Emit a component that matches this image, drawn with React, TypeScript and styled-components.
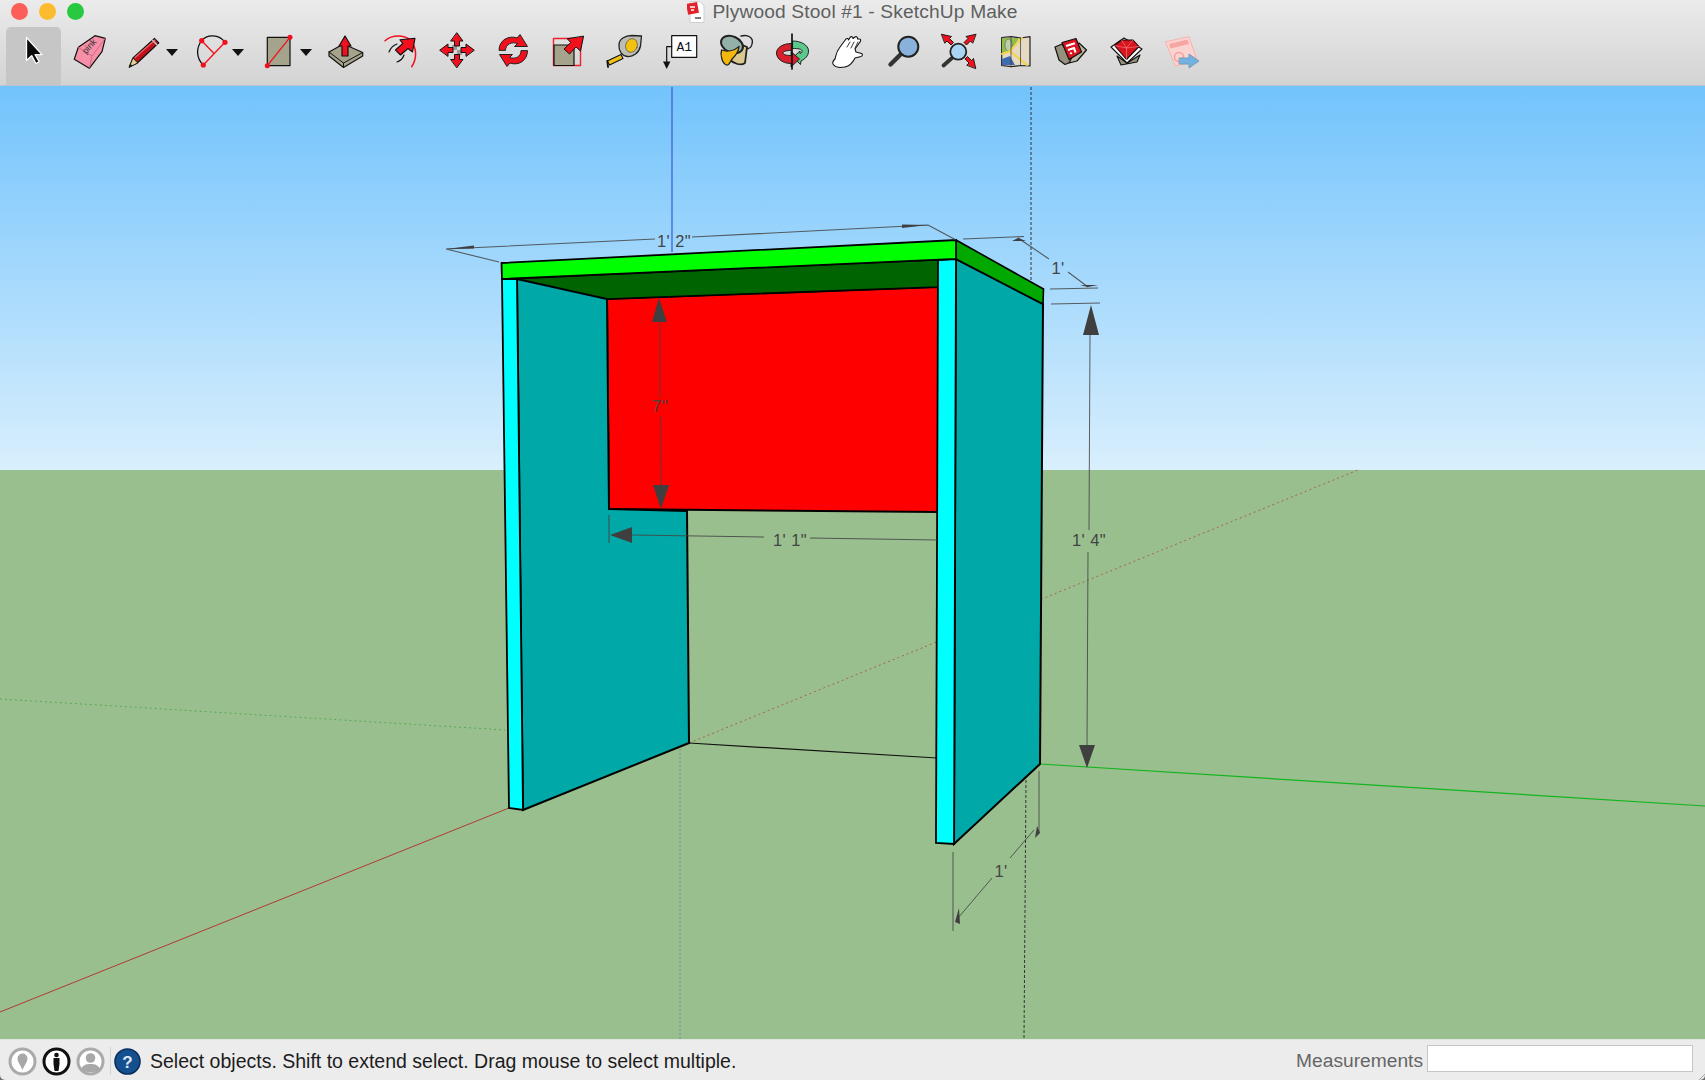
import React from "react";
import styled, { createGlobalStyle } from "styled-components";

const Global = createGlobalStyle`
  html, body { margin: 0; padding: 0; background: #6d6d6d; }
  body { font-family: "Liberation Sans", Arial, sans-serif; overflow: hidden; }
`;

const Window = styled.div`
  width: 1705px;
  height: 1080px;
  display: flex;
  flex-direction: column;
  overflow: hidden;
  border-radius: 0 0 5px 5px;
`;

const Chrome = styled.header`
  height: 86px;
  flex: none;
  display: flex;
  flex-direction: column;
  background: linear-gradient(#ebebeb, #d3d3d3);
  border-bottom: 1px solid #b9c6cf;
  box-sizing: border-box;
`;

const TitleBar = styled.div`
  height: 27px;
  flex: none;
  display: grid;
  grid-template-columns: 1fr auto 1fr;
  align-items: center;
  padding: 0 11px;
`;

const Lights = styled.div`
  display: flex;
  gap: 11px;
  margin-top: -5px;
  align-self: center;
`;

const Light = styled.span<{ $c: string }>`
  width: 17px;
  height: 17px;
  border-radius: 50%;
  background: ${(p) => p.$c};
`;

const Title = styled.div`
  display: flex;
  align-items: center;
  gap: 7px;
  font-size: 19.2px;
  color: #5f5f5f;
  margin-top: -4px;
  letter-spacing: 0.14px;
`;

const ToolBar = styled.div`
  display: flex;
  padding-left: 6px;
  height: 58px;
`;

const Tool = styled.div<{ $w: number; $active?: boolean; $caret?: boolean }>`
  width: ${(p) => p.$w}px;
  flex: none;
  height: 58px;
  display: flex;
  box-sizing: border-box;
  padding-top: 1px;
  align-items: flex-start;
  justify-content: ${(p) => (p.$caret ? "flex-start" : "center")};
  padding-left: ${(p) => (p.$caret ? "6px" : "0")};
  border-radius: 5px 5px 0 0;
  background: ${(p) => (p.$active ? "#c6c6c6" : "transparent")};
`;

const IconSvg = styled.svg`
  width: 44px;
  height: 44px;
  flex: none;
`;

const Caret = styled.span`
  width: 0;
  height: 0;
  margin-top: 21px;
  border-left: 6.5px solid transparent;
  border-right: 6.5px solid transparent;
  border-top: 7px solid #111;
`;

const Viewport = styled.main`
  flex: 1;
  position: relative;
  display: flex;
  flex-direction: column;
  min-height: 0;
`;

const Sky = styled.div`
  height: 384px;
  flex: none;
  background: linear-gradient(#72c3fc, #d9effd);
`;

const Ground = styled.div`
  flex: 1;
  background: #9abf8e;
`;

const ModelSvg = styled.svg`
  position: absolute;
  left: 0;
  top: 0;
  width: 1705px;
  height: 953px;
`;

const DimText = styled.text`
  font-family: "Liberation Sans", Arial, sans-serif;
  font-size: 16.5px;
  fill: #444;
  text-anchor: middle;
  letter-spacing: 0.4px;
`;

const StatusBar = styled.footer`
  height: 41px;
  flex: none;
  display: flex;
  align-items: center;
  position: relative;
  background: #ececec;
  border-top: 1px solid #dfe5dc;
  box-sizing: border-box;
  padding: 2px 12px 0 8px;
`;

const StatusIcons = styled.div`
  display: flex;
  gap: 5px;
  align-items: center;
`;

const StatusDivider = styled.span`
  width: 1px;
  height: 28px;
  background: #d4d4d4;
  margin: 0 2px 0 5px;
`;

const StatusText = styled.span`
  font-size: 19.5px;
  color: #1c1c1c;
  margin-left: 8px;
  flex: 1;
  white-space: nowrap;
`;

const MeasureLabel = styled.span`
  font-size: 19.2px;
  color: #666;
  margin-right: 4px;
`;

const MeasureBox = styled.div`
  width: 266px;
  height: 27px;
  box-sizing: border-box;
  background: #fff;
  border: 1px solid #c6c6c6;
  margin-top: -6px;
`;

const Grip = styled.svg`
  position: absolute;
  right: 0;
  bottom: 0;
  width: 8px;
  height: 8px;
`;

/* ---------- toolbar icons ---------- */
const Ic: React.FC<{ children: React.ReactNode }> = ({ children }) => (
  <IconSvg viewBox="0 0 44 44" fill="none" strokeLinejoin="round" strokeLinecap="round">
    {children}
  </IconSvg>
);

const Select = () => (
  <Ic>
    <path d="M14.5 9.5V32.5L19.7 27.6 23.9 35.5 27.1 33.8 23.1 26.6H30Z" fill="#0a0a0a" stroke="#fff" strokeWidth="1.3" />
  </Ic>
);

const Eraser = () => (
  <Ic>
    <path d="M7.3 31.3 11.3 19.3 28 7.7 38.3 10.3 35 23.7 22.3 40.3Z" fill="#f78fa8" stroke="#111" strokeWidth="1.2" />
    <path d="M11.3 19.3 25 28 38.3 10.3M25 28 22.3 40.3" stroke="#c9607c" strokeWidth="0.8" />
    <text x="23" y="21" fontSize="9" fontFamily="Liberation Sans, sans-serif" fill="#333" textAnchor="middle" transform="rotate(-48 23 19)">pink</text>
  </Ic>
);

const Pencil = () => (
  <Ic>
    <path d="M7.3 39 11 30 32.5 10.5 36.8 14.8 15.5 34.8Z" fill="#c1111b" stroke="#111" strokeWidth="1.2" />
    <path d="M7.3 39 11 30 15.5 34.8Z" fill="#e6cf92" stroke="#111" strokeWidth="0.8" />
    <path d="M7.3 39 8.6 36 10.4 37.6Z" fill="#111" />
    <path d="M13 29.5 33 12" stroke="#f4616a" strokeWidth="1.2" />
    <path d="M30.5 12.2 34.8 16.6" stroke="#bbb" strokeWidth="1.6" />
  </Ic>
);

const Arc = () => (
  <Ic>
    <path d="M13.7 12.7C19 6 31 6 37 14.3" stroke="#111" strokeWidth="1.3" />
    <path d="M13.7 12.7C8 20 8 30 15.3 37" stroke="#111" strokeWidth="1.3" />
    <path d="M13.7 12.7 25.3 24.7M37 14.3 15.3 37" stroke="#f1101c" strokeWidth="1.3" />
    <circle cx="13.7" cy="12.7" r="2.6" fill="#f1101c" />
    <circle cx="37" cy="14.3" r="2.6" fill="#f1101c" />
    <circle cx="15.3" cy="37" r="2.6" fill="#f1101c" />
  </Ic>
);

const RectIcon = () => (
  <Ic>
    <rect x="11.3" y="9.3" width="22.7" height="28.4" fill="#a6a38d" stroke="#111" strokeWidth="1.2" />
    <path d="M11.3 37.7 34 9.3" stroke="#f1101c" strokeWidth="1.3" />
    <circle cx="11.3" cy="37.7" r="2.5" fill="#f1101c" />
    <circle cx="34" cy="9.3" r="2.5" fill="#f1101c" />
  </Ic>
);

const PushPull = () => (
  <Ic>
    <path d="M6 24 20.5 16 39.7 24.5V28L20.5 39.5 6 28Z" fill="#a6a38d" stroke="#111" strokeWidth="1.2" />
    <path d="M6 24 20.5 35 39.7 24.5M20.5 35V39.5" stroke="#111" strokeWidth="1" />
    <path d="M22 8 28 18H25V28H19V18H16Z" fill="#f1101c" stroke="#111" strokeWidth="1.2" />
  </Ic>
);

const Offset = () => (
  <Ic>
    <path d="M6 12.7C14 6 27 7 32 13 38 20 38 31 32.7 38.7" stroke="#f1101c" strokeWidth="1.5" />
    <path d="M10 24C12 19 15 17 18 16M18 34C21 33 24 30 25 27" stroke="#111" strokeWidth="1.2" />
    <path d="M36 10.3 33.5 24 29 20.5 21.5 27 16.5 22 23.8 15.5 21 11.8Z" fill="#f1101c" stroke="#111" strokeWidth="1.1" />
  </Ic>
);

const Move = () => (
  <Ic>
    <rect x="17" y="17" width="10" height="10" fill="#d9d9d9" />
    <path d="M17 17h5v5h-5zM22 22h5v5h-5z" fill="#999" />
    <path d="M22 5 28 13H24.5V18H19.5V13H16Z" fill="#f1101c" stroke="#111" strokeWidth="1" />
    <path d="M22 39.5 28 31.5H24.5V26.5H19.5V31.5H16Z" fill="#f1101c" stroke="#111" strokeWidth="1" />
    <path d="M5 22 13 16V19.5H18V24.5H13V28Z" fill="#f1101c" stroke="#111" strokeWidth="1" />
    <path d="M39 22 31 16V19.5H26V24.5H31V28Z" fill="#f1101c" stroke="#111" strokeWidth="1" />
  </Ic>
);

const Rotate = () => (
  <Ic>
    <path d="M8 22C8 12 18 7 26 10L29 6.5 36.5 18.5 23.5 18.5 26.5 15.5C21 13.5 14.5 16 14.5 22Z" fill="#f1101c" stroke="#222" strokeWidth="1" />
    <path d="M36.5 23C36.5 33 27 38 19 35L16 38.5 8.5 26.5 21.5 26.5 18.5 29.5C24 31.5 30 29 30 23Z" fill="#f1101c" stroke="#222" strokeWidth="1" />
  </Ic>
);

const Scale = () => (
  <Ic>
    <rect x="7.5" y="10.5" width="27" height="27" stroke="#f1202c" strokeWidth="1.4" />
    <rect x="8" y="17" width="20" height="20.5" fill="#a6a38d" stroke="#111" strokeWidth="1.2" />
    <path d="M37.5 8.5 34.5 23 30 19 23.5 26 18 21 24.8 14.5 21.5 11Z" fill="#f1101c" stroke="#111" strokeWidth="1" />
  </Ic>
);

const Tape = () => (
  <Ic>
    <path d="M5.3 33 19 26.5 21 30.5 7.5 37Z" fill="#f2c21a" stroke="#111" strokeWidth="1.1" />
    <path d="M5.3 33 6 39" stroke="#111" strokeWidth="1.8" />
    <path d="M17 17C17 11 23 7.5 30 7.5L39.5 8 38.5 18C37 25 31 29 25.5 28.5 20 28 16.5 23 17 17Z" fill="#bdbdb3" stroke="#222" strokeWidth="1.3" />
    <ellipse cx="29.5" cy="17.5" rx="5.8" ry="7" fill="#f4c20d" stroke="#555" strokeWidth="0.7" transform="rotate(20 29.5 17.5)" />
  </Ic>
);

const TextTool = () => (
  <Ic>
    <rect x="13.7" y="7.7" width="25" height="21.6" fill="#fff" stroke="#111" strokeWidth="1.2" />
    <text x="26.2" y="23" fontSize="13" fontFamily="Liberation Mono, monospace" fill="#111" textAnchor="middle">A1</text>
    <path d="M13.7 18.7H8.7V34" stroke="#111" strokeWidth="1.2" />
    <path d="M5 33.5H12.4L8.7 41Z" fill="#111" />
  </Ic>
);

const Paint = () => (
  <Ic>
    <path d="M19 13 33 19 31 35C27 38 20 36 15 31Z" fill="#d9c98f" stroke="#222" strokeWidth="1.8" />
    <ellipse cx="18" cy="16.5" rx="11.5" ry="8" transform="rotate(25 18 16.5)" fill="#94b0a8" stroke="#222" strokeWidth="2" />
    <path d="M27 8C34 6 40 10 38 16 37.5 19 35.5 20.5 33 21" stroke="#222" strokeWidth="1.4" />
    <path d="M7.5 22C13 24 20 23 25 18.5 24.5 24 21 28 19 30 16 33 15.5 38 12.5 37 8.5 35.5 6 28 7.5 22Z" fill="#f4b80d" stroke="#222" strokeWidth="1.3" />
  </Ic>
);

const Orbit = () => (
  <Ic>
    <path d="M23 13C31 13 38.5 17 38.5 23 38.5 28 35 31 31 33L30.5 36.5 23 29.5 30 23 30 25.5C31.5 25 32 24 32 23 32 21 28 20.5 23 20.5Z" fill="#5cc98c" stroke="#222" strokeWidth="1" />
    <path d="M21 15.5C13 15.5 6.5 19.5 6.5 25 6.5 31 13 35.5 21 35.5L21 39 29.5 31 21 23.5 21 27.5C16 27.5 13 26.5 13 25 13 23.5 16 22.5 21 22.5Z" fill="#d8202c" stroke="#222" strokeWidth="1" />
    <path d="M22 6V41" stroke="#111" strokeWidth="1.7" />
  </Ic>
);

const Hand = () => (
  <Ic>
    <path d="M8 36C7 34 9 32 10 31 11 27 11 24 15 19L21 11C22 10 23.5 10.5 23.5 12L25 9.5C26 8 28 8.5 28 10.5L30 9C31.5 8 33 9.5 32.5 11L34.5 11C36 11 36 13 35 14L30 21 31 24 36.5 25.5C38 26 37.5 28 36 28.5L30 30C28 34 25 38 20 39 15 40 10 39 8 36Z" fill="#fff" stroke="#111" strokeWidth="1.1" />
    <path d="M22 19 25 14M26 20 29 14M30 20 33 14" stroke="#222" strokeWidth="0.9" />
  </Ic>
);

const ZoomIcon = () => (
  <Ic>
    <path d="M20 26 9.5 36.5" stroke="#333" strokeWidth="4.4" />
    <circle cx="27.3" cy="18.7" r="10" fill="#88b2dc" stroke="#222" strokeWidth="2" />
  </Ic>
);

const Ext = () => (
  <Ic>
    <path d="M15 30 6.5 37.5" stroke="#333" strokeWidth="3.8" />
    <circle cx="21.3" cy="23.7" r="8" fill="#a9d5f3" stroke="#222" strokeWidth="1.8" />
    <path d="M4.7 6.3 14.5 8.5 12.5 10.5 16.5 14.5 14 17 10 13 8 15Z" fill="#f1101c" stroke="#111" strokeWidth="0.9" />
    <path d="M38.7 6.3 29 8.5 31 10.5 27 14.5 29.5 17 33.5 13 35.5 15Z" fill="#f1101c" stroke="#111" strokeWidth="0.9" />
    <path d="M38.7 40.3 36.5 30.5 34.5 32.5 30.5 28.5 28 31 32 35 30 37Z" fill="#f1101c" stroke="#111" strokeWidth="0.9" />
  </Ic>
);

const MapIcon = () => (
  <Ic>
    <path d="M8.7 9.5 18 8.7 27.5 10 37 8.7V38L27.5 37.5 18 38.7 8.7 37.5Z" fill="#e6d9c3" stroke="#222" strokeWidth="1.2" />
    <path d="M9 10H26L18 23 9 26Z" fill="#8fbf45" />
    <ellipse cx="15.5" cy="17" rx="3.6" ry="6" fill="#b8cfa8" stroke="#777" strokeWidth="0.9" />
    <path d="M9 37H22L17 28 9 31Z" fill="#3f6cb0" />
    <path d="M9 26 17 23 34 37M17 23 29 10" stroke="#f0d44a" strokeWidth="2" />
    <path d="M18 8.7V38.7M27.5 10V37.5" stroke="#333" strokeWidth="0.7" />
  </Ic>
);

const Warehouse = () => (
  <Ic>
    <path d="M6 19 13 16 24 33 16 36.5 10 32Z" fill="#96917c" stroke="#111" strokeWidth="1.2" />
    <path d="M30 15 37.5 22 28 33 20 35Z" fill="#b8b5a3" stroke="#111" strokeWidth="1.2" />
    <path d="M13 14.5 27 10.5 32.5 24 20 31.5Z" fill="#d9141e" stroke="#111" strokeWidth="1.2" />
    <path d="M17 18 26 15.2M19 22 25 20 26.5 24.5M21.5 26 22.5 24.5" stroke="#fff" strokeWidth="2.2" strokeLinecap="butt" />
  </Ic>
);

const Ruby = () => (
  <Ic>
    <path d="M13 28 23 35 36 27 33 34 17 37Z" fill="#96917c" stroke="#111" strokeWidth="1.1" />
    <path d="M7 19 20 10 38 21 23 35Z" fill="#fff" stroke="#111" strokeWidth="1.1" />
    <path d="M10.5 17.5 17.5 12H29L35 18.5 22.5 31.5Z" fill="#d9141e" stroke="#111" strokeWidth="1.1" />
    <path d="M10.5 17.5 22.5 20 35 18.5M17.5 12 22.5 20 29 12M22.5 20V31.5" stroke="#f4777c" strokeWidth="0.7" />
  </Ic>
);

const LayoutIcon = () => (
  <Ic>
    <path d="M5.7 13.7 29 8.7 37 32 15.7 38Z" fill="#fbd3d1" stroke="#f7b3b0" strokeWidth="1" />
    <path d="M9 16 27.5 11.5 29 16 10.5 20.5Z" fill="#f7a5a3" />
    <circle cx="19" cy="29" r="4.5" stroke="#f59e9c" strokeWidth="1.4" />
    <path d="M19.5 30H29V26L39 33 29 40V36H19.5Z" fill="#6fb2e3" stroke="#7f9ab0" strokeWidth="1" />
  </Ic>
);

const tools: { Icon: React.FC; w: number; caret?: boolean; active?: boolean }[] = [
  { Icon: Select, w: 55, active: true },
  { Icon: Eraser, w: 55 },
  { Icon: Pencil, w: 66, caret: true },
  { Icon: Arc, w: 68, caret: true },
  { Icon: RectIcon, w: 67, caret: true },
  { Icon: PushPull, w: 56 },
  { Icon: Offset, w: 56 },
  { Icon: Move, w: 55.8 },
  { Icon: Rotate, w: 55.8 },
  { Icon: Scale, w: 55.8 },
  { Icon: Tape, w: 55.8 },
  { Icon: TextTool, w: 55.8 },
  { Icon: Paint, w: 55.8 },
  { Icon: Orbit, w: 55.8 },
  { Icon: Hand, w: 55.8 },
  { Icon: ZoomIcon, w: 55.8 },
  { Icon: Ext, w: 55.8 },
  { Icon: MapIcon, w: 55.8 },
  { Icon: Warehouse, w: 55.8 },
  { Icon: Ruby, w: 55.8 },
  { Icon: LayoutIcon, w: 55.8 },
];

/* ---------- 3D model ---------- */
const INK = "#444";
const Dim: React.FC<{ d: string; o?: number; w?: number }> = ({ d, o = 0.85, w = 1.1 }) => (
  <path d={d} stroke={INK} strokeWidth={w} fill="none" opacity={o} />
);
const Head: React.FC<{ p: string }> = ({ p }) => <polygon points={p} fill="#3f3f3f" />;

const Model = () => (
  <ModelSvg viewBox="0 86 1705 953">
    {/* axes */}
    <path d="M0 1012 509 808" stroke="#b03a34" strokeWidth="1" fill="none" />
    <path d="M689 743 1358 470" stroke="#a8614f" strokeWidth="1" strokeDasharray="2 3" fill="none" />
    <path d="M0 699 505 730" stroke="#55ab55" strokeWidth="1" strokeDasharray="2 3" fill="none" />
    <path d="M1040 764 1705 806" stroke="#12b41e" strokeWidth="1.2" fill="none" />
    <path d="M672 87V252" stroke="#3a56d8" strokeWidth="1.2" fill="none" />
    <path d="M680 745V1039" stroke="#6f8aa0" strokeWidth="1" strokeDasharray="2 2" fill="none" />
    <path d="M1031 87V280" stroke="#333" strokeWidth="1" strokeDasharray="3 2" fill="none" />
    <path d="M1026 780 1024 1039" stroke="#333" strokeWidth="1" strokeDasharray="3 2" fill="none" />

    {/* shelf */}
    <polygon points="607,299 938,287 938,512 609,509" fill="#ff0000" stroke="#000" strokeWidth="2" />
    <polygon points="502,279 956,259 938,287 607,299" fill="#006400" stroke="#000" strokeWidth="1.6" />

    {/* left side */}
    <polygon points="517,279 607,299 609,509 687,511 689,743 523,810" fill="#00a8a8" stroke="#000" strokeWidth="2" />
    <polygon points="502,279 517,279 523,810 509,808" fill="#00ffff" stroke="#000" strokeWidth="1.8" />

    {/* floor edge */}
    <path d="M689 743 937 758" stroke="#111" strokeWidth="1.2" fill="none" />

    {/* right side */}
    <polygon points="956,259 1043,304 1040,764 954,844" fill="#00a8a8" stroke="#000" strokeWidth="2" />
    <polygon points="938,260 956,259 954,844 936,843" fill="#00ffff" stroke="#000" strokeWidth="1.8" />

    {/* top board */}
    <polygon points="956,240 1043.5,289 1043,304 956,259" fill="#00a800" stroke="#000" strokeWidth="1.6" />
    <polygon points="501.5,263 956,240 956,259 502,279" fill="#00ff00" stroke="#000" strokeWidth="1.8" />

    {/* 1' 2" */}
    <Dim d="M446 249 655 239M692 237 928 225M446 249 499 262M928 225 956 240" />
    <Head p="446,249 474,245.5 474,248.5" />
    <Head p="928,225 902,224.5 902,228" />
    <DimText x="674" y="247">1' 2"</DimText>

    {/* 1' depth */}
    <Dim d="M963 239 1024 236.5M1018 238 1049 259M1068 272 1088 287M1050 289 1098 288" />
    <Head p="1018,238 1012,241 1026,241" />
    <Head p="1088,287 1080,285 1098,285" />
    <DimText x="1058" y="274">1'</DimText>

    {/* 1' 4" */}
    <Dim d="M1051 304 1100 303M1090 335 1089 530M1088 552 1087 746" w={1} />
    <Head p="1091,305 1083,335 1099,335" />
    <Head p="1087,768 1079,745 1095,745" />
    <DimText x="1089" y="546">1' 4"</DimText>

    {/* 7" */}
    <Dim d="M660 322V398M660.5 416 661 486" w={1} />
    <Head p="659,298 652,322 667,322" />
    <Head p="661,509 653,485 669,485" />
    <DimText x="660" y="412">7"</DimText>

    {/* 1' 1" */}
    <Dim d="M632 535 764 537M810 538 937 540M609 515V543" />
    <Head p="610,535 632,527 632,543" />
    <DimText x="790" y="546">1' 1"</DimText>

    {/* 1' width, bottom */}
    <Dim d="M953 852V931M1039 771V833M1034 830 1010 858M992 878 958 918" w={1} />
    <Head p="955,922 959,908 960,924" />
    <Head p="1037,826 1035,838 1040,833" />
    <DimText x="1001" y="877">1'</DimText>
  </ModelSvg>
);

/* ---------- status bar icons ---------- */
const Sm = styled.svg`
  width: 29px;
  height: 29px;
  flex: none;
`;

const Geo = () => (
  <Sm viewBox="0 0 29 29">
    <circle cx="14.5" cy="14.5" r="12.5" fill="#fff" stroke="#aaa" strokeWidth="3" />
    <path d="M14.5 23C13 19 9.5 15 9.5 11.5A5 5 0 0 1 19.5 11.5C19.5 15 16 19 14.5 23Z" fill="#a8a8a8" />
  </Sm>
);

const Info = () => (
  <Sm viewBox="0 0 29 29">
    <circle cx="14.5" cy="14.5" r="12.5" fill="#fff" stroke="#111" strokeWidth="3" />
    <circle cx="14.5" cy="8" r="2.3" fill="#111" />
    <path d="M11.5 11H17.5V17L16.5 24H12.5L11.5 17Z" fill="#111" />
  </Sm>
);

const User = () => (
  <Sm viewBox="0 0 29 29">
    <circle cx="14.5" cy="14.5" r="12.5" fill="#fff" stroke="#aaa" strokeWidth="3" />
    <circle cx="14.5" cy="11" r="4.8" fill="#a8a8a8" />
    <path d="M5 23C6 18 10 17 14.5 17S23 18 24 23C21 26 8 26 5 23Z" fill="#a8a8a8" />
  </Sm>
);

const Help = () => (
  <Sm viewBox="0 0 29 29">
    <circle cx="14.5" cy="14.5" r="12.5" fill="#14508f" stroke="#0b2f5c" strokeWidth="1.6" />
    <text x="14.5" y="20.5" fontSize="17" fontWeight="700" fontFamily="Liberation Sans, sans-serif" fill="#dfe8f2" textAnchor="middle">?</text>
  </Sm>
);

export default function App() {
  return (
    <>
      <Global />
      <Window>
        <Chrome>
          <TitleBar>
            <Lights>
              <Light $c="#fc5f57" />
              <Light $c="#fdbc2e" />
              <Light $c="#28c840" />
            </Lights>
            <Title>
              <svg width="18" height="22" viewBox="0 0 18 22">
                <path d="M3 0.5H13L17 5V21.5H3Z" fill="#fff" stroke="#cfcfcf" strokeWidth="1" />
                <rect x="0" y="2" width="11" height="11" fill="#e2222a" transform="rotate(-10 5 7)" />
                <path d="M3 6H8M4 9H7" stroke="#fff" strokeWidth="1.4" />
                <path d="M8 17H14" stroke="#444" strokeWidth="1.4" />
              </svg>
              Plywood Stool #1 - SketchUp Make
            </Title>
            <span />
          </TitleBar>
          <ToolBar>
            {tools.map(({ Icon, w, caret, active }, i) => (
              <Tool key={i} $w={w} $caret={caret} $active={active}>
                <Icon />
                {caret && <Caret />}
              </Tool>
            ))}
          </ToolBar>
        </Chrome>
        <Viewport>
          <Sky />
          <Ground />
          <Model />
        </Viewport>
        <StatusBar>
          <StatusIcons>
            <Geo />
            <Info />
            <User />
          </StatusIcons>
          <StatusDivider />
          <Help />
          <StatusText>Select objects. Shift to extend select. Drag mouse to select multiple.</StatusText>
          <MeasureLabel>Measurements</MeasureLabel>
          <MeasureBox />
          <Grip viewBox="0 0 8 8">
            <path d="M2 8 8 2M5 8 8 5" stroke="#aaa" strokeWidth="1" />
          </Grip>
        </StatusBar>
      </Window>
    </>
  );
}
